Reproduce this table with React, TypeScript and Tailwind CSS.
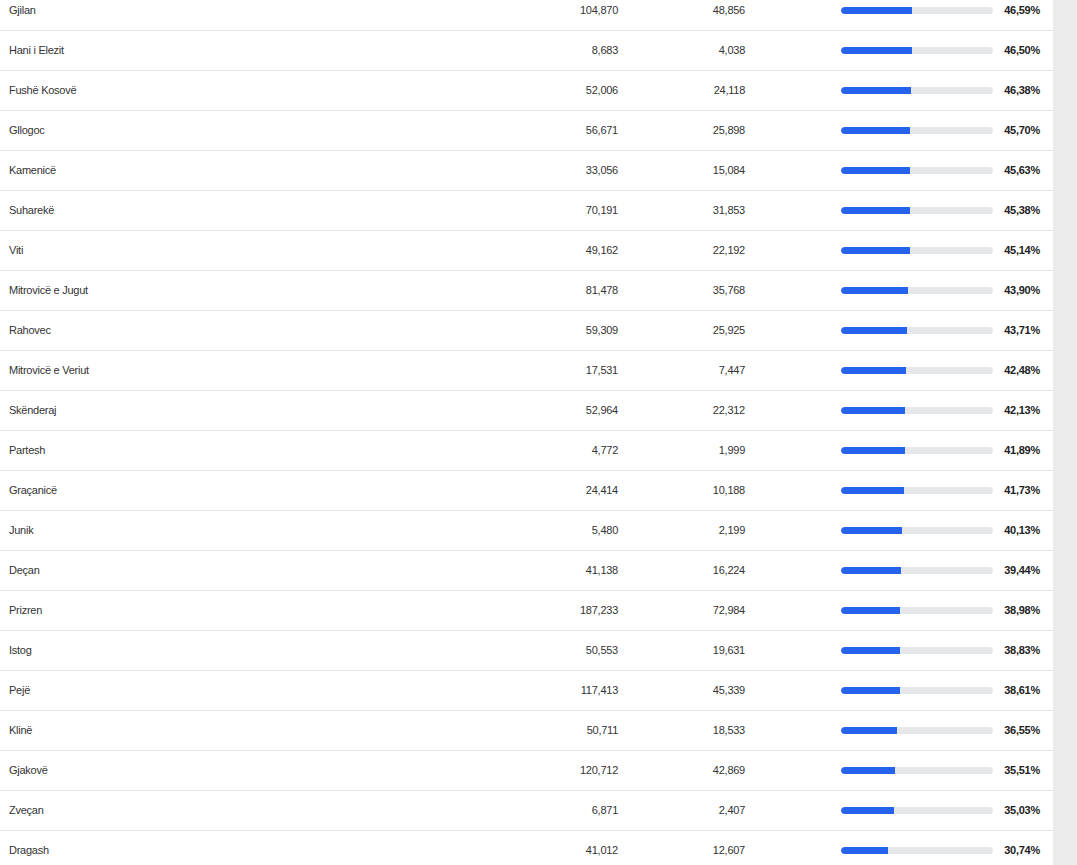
const rows: [string, string, string, number][] = [
  ['Gjilan', '104,870', '48,856', 46.59],
  ['Hani i Elezit', '8,683', '4,038', 46.5],
  ['Fushë Kosovë', '52,006', '24,118', 46.38],
  ['Gllogoc', '56,671', '25,898', 45.7],
  ['Kamenicë', '33,056', '15,084', 45.63],
  ['Suharekë', '70,191', '31,853', 45.38],
  ['Viti', '49,162', '22,192', 45.14],
  ['Mitrovicë e Jugut', '81,478', '35,768', 43.9],
  ['Rahovec', '59,309', '25,925', 43.71],
  ['Mitrovicë e Veriut', '17,531', '7,447', 42.48],
  ['Skënderaj', '52,964', '22,312', 42.13],
  ['Partesh', '4,772', '1,999', 41.89],
  ['Graçanicë', '24,414', '10,188', 41.73],
  ['Junik', '5,480', '2,199', 40.13],
  ['Deçan', '41,138', '16,224', 39.44],
  ['Prizren', '187,233', '72,984', 38.98],
  ['Istog', '50,553', '19,631', 38.83],
  ['Pejë', '117,413', '45,339', 38.61],
  ['Klinë', '50,711', '18,533', 36.55],
  ['Gjakovë', '120,712', '42,869', 35.51],
  ['Zveçan', '6,871', '2,407', 35.03],
  ['Dragash', '41,012', '12,607', 30.74],
]

const pct = (v: number) => v.toFixed(2).replace('.', ',') + '%'

export default function App() {
  return (
    <div className="flex h-[865px] overflow-hidden bg-[#ebebeb] font-['Liberation_Sans',Arial,sans-serif] text-[11px] tracking-[-0.25px] text-[#333]">
      <div className="w-[1053px] shrink-0 bg-white">
        <div className="-mt-[9px]">
          {rows.map(([name, pop, votes, p]) => (
            <div key={name} className="flex h-10 items-center border-b border-[#e3e3e3]">
              <div className="w-[540px] pl-[9px]">{name}</div>
              <div className="w-[78px] text-right">{pop}</div>
              <div className="w-[127px] text-right">{votes}</div>
              <div className="w-[96px]" />
              <div className="h-[7px] w-[152px] overflow-hidden rounded-full bg-[#e5e7eb]">
                <div className="h-full rounded-l-full bg-[#2563eb]" style={{ width: `${p}%` }} />
              </div>
              <div className="w-[47px] text-right font-bold text-[#222]">{pct(p)}</div>
            </div>
          ))}
        </div>
      </div>
      <div className="flex-1" />
    </div>
  )
}
